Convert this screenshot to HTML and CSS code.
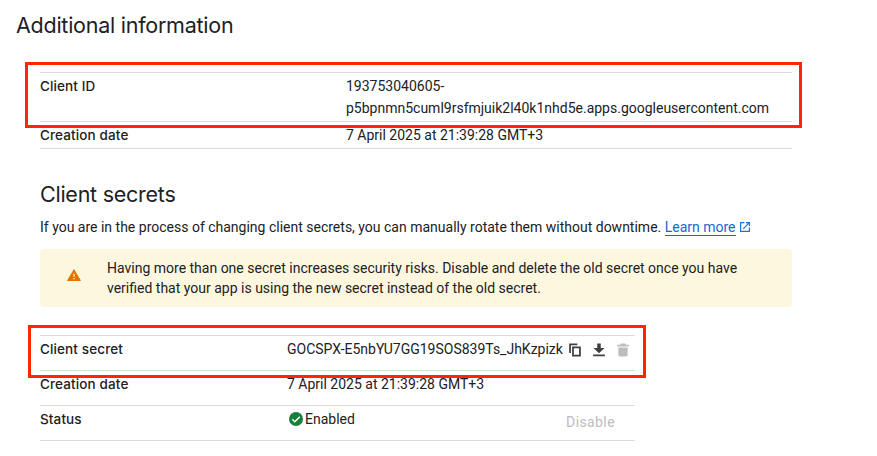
FILE: index.html
```html
<!DOCTYPE html>
<html lang="en">
<head>
<meta charset="utf-8">
<title>Additional information</title>
<link rel="stylesheet" href="styles.css">
</head>
<body>
<main class="page">
  <h1 class="title">Additional information</h1>
  <section class="info">
    <dl class="table client">
      <div class="row"><dt>Client ID</dt><dd>193753040605-<br>p5bpnmn5cuml9rsfmjuik2l40k1nhd5e.apps.googleusercontent.com</dd></div>
      <div class="row short"><dt>Creation date</dt><dd>7 April 2025 at 21:39:28 GMT+3</dd></div>
    </dl>
    <div class="mark mark-id"></div>
  </section>
  <section class="secrets">
    <h2 class="title">Client secrets</h2>
    <p class="intro">If you are in the process of changing client secrets, you can manually rotate them without downtime. <a class="link" href="#">Learn more</a><svg class="ext" viewBox="0 0 10 10" fill="none" stroke="currentColor" stroke-width="1.2"><path d="M4.4.6H.6v8.800h8.800V5.600M6 .6h3.400V4M9.300.7 3.200 6.800"/></svg></p>
    <div class="notice">
      <svg class="warn" viewBox="0 0 14 12"><path fill="#e37400" stroke="#e37400" stroke-linejoin="round" d="M7 .7 13.400 11.500H.6z"/><path fill="#fef7e0" d="M6.400 4.800h1.300v3H6.400zM6.400 8.900h1.300v1.300H6.400z"/></svg>
      <p>Having more than one secret increases security risks. Disable and delete the old secret once you have<br>verified that your app is using the new secret instead of the old secret.</p>
    </div>
    <dl class="table secret">
      <div class="row"><dt>Client secret</dt><dd class="key"><span class="code">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</span>
        <svg class="act" viewBox="0 0 24 24"><path fill="#3c4043" d="M16 1H2v16h3V4h11zM7 6v17h15V6zm12 14h-9V9h9z"/></svg>
        <svg class="act" viewBox="0 0 24 24"><path fill="#3c4043" d="M2 19.500h20v3H2zM9 1h6v7.500h6.500L12 17.500 2.500 8.500H9z"/></svg>
        <svg class="act" viewBox="0 0 24 24"><path fill="#bdbdbd" d="M8 1h8l1 2h5v3H2V3h5zM4 7.500h16V20a3 3 0 0 1-3 3H7a3 3 0 0 1-3-3z"/></svg></dd></div>
      <div class="row"><dt>Creation date</dt><dd>7 April 2025 at 21:39:28 GMT+3</dd></div>
      <div class="row"><dt>Status</dt><dd class="state"><svg class="ok" viewBox="0 0 14 14"><circle cx="7" cy="7" r="7" fill="#188038"/><path fill="none" stroke="#fff" stroke-width="1.500" d="m3.300 7.200 2.500 2.500 5-5"/></svg>Enabled<span class="disable">Disable</span></dd></div>
    </dl>
    <div class="mark mark-secret"></div>
  </section>
</main>
</body>
</html>
```
FILE: styles.css
```css
* { box-sizing: border-box; }
body {
  margin: 0;
  background: #fff;
  color: #202124;
  font: 14px/22px Roboto, sans-serif;
}
h1, h2, p, dl, dd { margin: 0; }
.page { width: 877px; height: 456px; padding: 11px 0 0 16px; overflow: hidden; }
.title {
  font: 400 21.5px/28px Inter, sans-serif;
  letter-spacing: -0.25px;
}
.info, .secrets { position: relative; width: 752px; margin-left: 24px; }
.info { margin-top: 33px; }
.row {
  display: grid;
  border-top: 1px solid #dadce0;
}
.row:last-child { border-bottom: 1px solid #dadce0; }
.client .row { grid-template-columns: 306px 1fr; height: 49px; padding-top: 2px; }
dt {
  font-family: Inter, sans-serif;
  font-size: 13.5px;
  font-weight: 500;
  letter-spacing: 0.12px;
}
.client .short { height: 28px; padding-top: 2px; }
.secrets { margin-top: 31px; }
.intro { display: flex; align-items: center; margin-top: 8px; white-space: pre; }
.link { color: #1967d2; text-decoration: none; line-height: 16px; border-bottom: 1px solid; }
.ext { width: 10px; height: 10px; margin-left: 4px; color: #1a73e8; }
.notice {
  display: flex;
  align-items: center;
  height: 58px;
  margin-top: 11px;
  padding-left: 27px;
  border-radius: 4px;
  background: #fef7e0;
  line-height: 20px;
}
.warn { width: 14px; height: 12px; margin: -6px 26px 0 0; }
.secret { width: 595px; margin-top: 28px; }
.secret .row { grid-template-columns: 247px 1fr; height: 35px; padding-top: 2px; }
.secret .row:last-child { height: 36px; }
.key { display: flex; align-items: center; height: 24px; }
.code { width: 281px; margin-top: -2px; white-space: nowrap; }
.act { width: 14px; height: 14px; margin-right: 10px; flex: none; }
.state { display: flex; align-items: center; height: 22px; }
.ok { width: 14px; height: 14px; margin: 0 2px; }
.disable { margin: 5px 20px 0 auto; color: #bdbdbd; letter-spacing: 0.4px; }
.mark { position: absolute; border: 3px solid #ff2600; }
.mark-id { left: -15px; top: -10px; width: 777px; height: 66px; }
.mark-secret { left: -12px; top: 145px; width: 618px; height: 53px; }
```
